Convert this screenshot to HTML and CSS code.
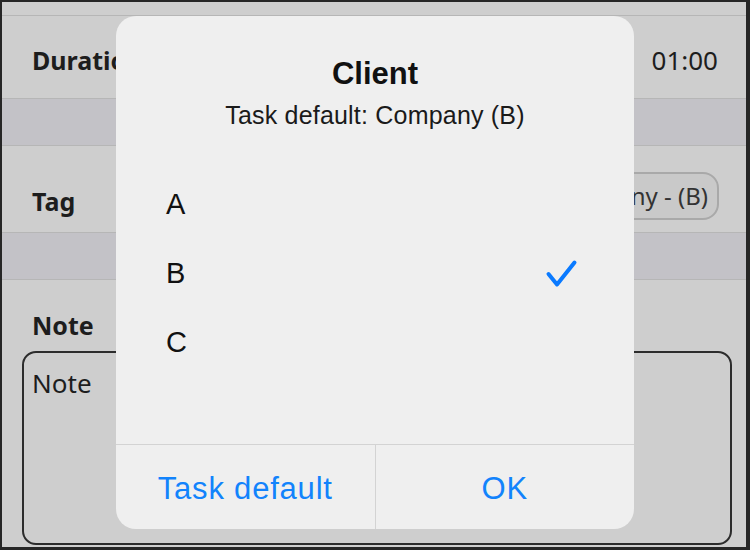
FILE: index.html
```html
<!DOCTYPE html>
<html lang="en">
<head>
    <meta charset="UTF-8">
    <meta name="viewport" content="width=device-width, initial-scale=1.0">
    <title>Client</title>
    <link rel="stylesheet" href="styles.css">
</head>
<body>
    <div class="frame">
        <div class="screen">
            <div class="page">
                <div class="topbar"></div>
                <div class="row row-duration">
                    <span class="label">Duration</span>
                    <span class="value">01:00</span>
                </div>
                <div class="section-gap"></div>
                <div class="row row-tag">
                    <span class="label">Tag</span>
                    <span class="pill">Company - (B)</span>
                </div>
                <div class="section-gap"></div>
                <div class="note-block">
                    <div class="label">Note</div>
                    <div class="note-box">Note</div>
                </div>
            </div>

            <div class="dialog">
                <div class="dialog-head">
                    <h1 class="dialog-title">Client</h1>
                    <p class="dialog-sub">Task default: Company (B)</p>
                </div>
                <ul class="options">
                    <li class="option">A</li>
                    <li class="option selected">B
                        <svg class="check" width="33" height="29" viewBox="0 0 33 29">
                            <path d="M3.5 15 L12 25.5 L29.5 3.5" fill="none" stroke="#0a7aff" stroke-width="4" stroke-linecap="round" stroke-linejoin="round"/>
                        </svg>
                    </li>
                    <li class="option">C</li>
                </ul>
                <div class="dialog-buttons">
                    <button type="button" class="dialog-btn">Task default</button>
                    <button type="button" class="dialog-btn">OK</button>
                </div>
            </div>
        </div>
    </div>
</body>
</html>
```

FILE: styles.css
```css
body {
    margin: 0;
    padding: 0;
    background-color: #262626;
    font-family: "Noto Sans", "Liberation Sans", sans-serif;
    color: #1d1d1d;
}
.frame {
    width: 750px;
    height: 550px;
    box-sizing: border-box;
    border-style: solid;
    border-color: #262626;
    border-width: 2px 4px 3px 2px;
    overflow: hidden;
}
.screen {
    position: relative;
    width: 100%;
    height: 100%;
    background-color: #cecece;
    overflow: hidden;
}
.topbar {
    height: 13px;
    border-bottom: 1px solid #b6b6b6;
}
.row {
    display: flex;
    justify-content: space-between;
    align-items: center;
    box-sizing: border-box;
    border-bottom: 1px solid #b6b6b6;
    padding-left: 30px;
}
.label {
    font-size: 25px;
    font-weight: bold;
    line-height: 34px;
}
.row-duration {
    height: 83px;
    padding-top: 5px;
    padding-right: 28px;
}
.value {
    font-size: 26px;
    line-height: 34px;
}
.section-gap {
    height: 46px;
    background-color: #c3c2c7;
    border-bottom: 1px solid #b6b6b6;
}
.row-tag {
    height: 87px;
    padding-top: 14px;
    padding-right: 27px;
}
.row-tag .label {
    margin-top: 10px;
}
.pill {
    box-sizing: border-box;
    height: 48px;
    padding: 0 9px 0 16px;
    border: 2px solid #a9a9a9;
    border-radius: 16px;
    background-color: #c9c9c9;
    font-size: 24px;
    line-height: 44px;
    color: #333333;
}
.note-block {
    padding-top: 28px;
}
.note-block .label {
    padding-left: 30px;
}
.note-box {
    box-sizing: border-box;
    width: 710px;
    height: 194px;
    margin: 9px 0 0 20px;
    padding: 15px 8px;
    border: 2px solid #2c2c2c;
    border-radius: 14px;
    font-size: 26px;
    line-height: 30px;
}

.dialog {
    position: absolute;
    left: 114px;
    top: 14px;
    width: 518px;
    height: 513px;
    display: flex;
    flex-direction: column;
    background-color: #efefef;
    border-radius: 20px;
    font-family: "Liberation Sans", Arial, sans-serif;
    color: #111111;
    overflow: hidden;
}
.dialog-head {
    padding-top: 40px;
    text-align: center;
}
.dialog-title {
    margin: 0;
    font-size: 31px;
    line-height: 36px;
    font-weight: bold;
}
.dialog-sub {
    margin: 9px 0 0;
    font-size: 25px;
    line-height: 28px;
    letter-spacing: 0.2px;
    color: #1a1a1a;
}
.options {
    flex: 1;
    list-style: none;
    margin: 41px 0 0;
    padding: 0;
}
.option {
    display: flex;
    justify-content: space-between;
    align-items: center;
    height: 69px;
    padding: 0 56px 0 50px;
    font-size: 29px;
}
.dialog-buttons {
    display: flex;
    height: 84px;
    border-top: 1px solid #d3d3d3;
}
.dialog-btn {
    flex: 1;
    margin: 0;
    padding: 3px 0 0;
    border: none;
    background: none;
    font-family: "Liberation Sans", Arial, sans-serif;
    font-size: 31px;
    letter-spacing: 0.8px;
    color: #1283fc;
    cursor: pointer;
}
.dialog-btn + .dialog-btn {
    border-left: 1px solid #d3d3d3;
}
```
